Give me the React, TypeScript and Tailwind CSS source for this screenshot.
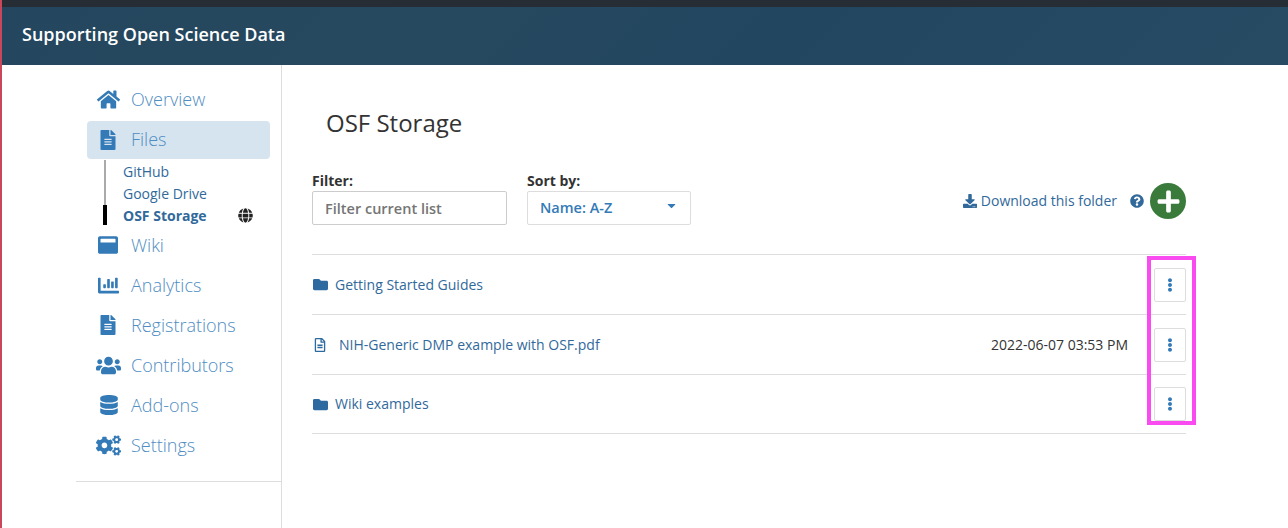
import { FaHome, FaFileAlt, FaWindowMaximize, FaChartBar, FaUsers, FaDatabase, FaCogs, FaGlobe, FaDownload, FaQuestionCircle, FaPlus, FaFolder, FaRegFileAlt, FaEllipsisV, FaCaretDown } from "react-icons/fa";
import type { ComponentType } from "react";

type Item = { label: string; icon: ComponentType<{ className?: string }>; size: string; offset: string };

const bottomNav: Item[] = [
  { label: "Analytics", icon: FaChartBar, size: "text-[21px]", offset: "w-[44px] pl-[11px]" },
  { label: "Registrations", icon: FaFileAlt, size: "text-[20px]", offset: "w-[44px] pl-[11px]" },
  { label: "Contributors", icon: FaUsers, size: "text-[25px]", offset: "w-[44px] pl-[9px]" },
  { label: "Add-ons", icon: FaDatabase, size: "text-[20px]", offset: "w-[44px] pl-[12px]" },
  { label: "Settings", icon: FaCogs, size: "text-[25px]", offset: "w-[44px] pl-[9px]" },
];

function NavRow({ item }: { item: Item }) {
  const Icon = item.icon;
  return (
    <div className="h-10 flex items-center text-[18px] font-light text-[#4f8dc2]">
      <span className={`${item.offset} shrink-0 text-[#337ab7] ${item.size}`}>
        <Icon />
      </span>
      <span>{item.label}</span>
    </div>
  );
}

function Row({ icon, name, date, h, nameClass }: { icon: "folder" | "file"; name: string; date?: string; h: string; nameClass?: string }) {
  return (
    <div className={`${h} flex items-center border-b border-[#dddddd] text-[14px]`}>
      {icon === "folder" ? (
        <FaFolder className="text-[15px] text-[#2d6a9f] mr-[7px] ml-[1px] shrink-0" />
      ) : (
        <FaRegFileAlt className="text-[14px] text-[#2d6a9f] mr-[12px] ml-[1px] shrink-0" />
      )}
      <span className={`text-[#31699b] ${nameClass ?? ""}`}>{name}</span>
      <span className="ml-auto mr-[26px] text-[#333333]">{date}</span>
      <button className="w-[32px] h-[34px] border border-[#dddddd] rounded-[2px] bg-white flex items-center justify-center text-[#337ab7]">
        <FaEllipsisV className="text-[14px]" />
      </button>
    </div>
  );
}

export default function App() {
  return (
    <div className="w-[1288px] h-[528px] overflow-hidden bg-white relative font-['Open_Sans',sans-serif] text-[#333333]">
      <div className="h-[7px] bg-[#262d35]" />
      <div className="h-[58px] bg-[linear-gradient(135deg,#24475f_0%,#26495f_35%,#224660_60%,#264b63_100%)] pl-[22px] pb-[4px] flex items-center text-white text-[18px] font-semibold">
        Supporting Open Science Data
      </div>
      <div className="absolute left-0 top-0 bottom-0 w-[2px] bg-[#c8475a]" />
      <div className="flex h-[463px]">
        <aside className="w-[282px] border-r border-[#dddddd] pl-[76px] shrink-0 h-full">
          <div className="h-[417px] border-b border-[#dddddd] pt-[15px]">
            <div className="pl-[11px] pr-[11px]">
              <div className="h-[41px] pb-[2px] flex items-center text-[18px] font-light text-[#4f8dc2]">
                <span className="w-[44px] pl-[10px] shrink-0 text-[#337ab7]"><FaHome className="text-[23px]" /></span>
                <span>Overview</span>
              </div>
              <div className="h-[38px] pb-[1px] flex items-center text-[18px] font-light text-[#4f8dc2] bg-[#d6e4f0] rounded-[4px]">
                <span className="w-[44px] pl-[11px] shrink-0 text-[#337ab7] text-[20px]"><FaFileAlt /></span>
                <span>Files</span>
              </div>
              <div className="relative pl-[36px] pt-[1px] text-[14px] text-[#31699b]">
                <div className="absolute left-[17px] top-[1px] w-[2px] h-[45px] bg-[#aaaaaa]" />
                <div className="absolute left-[16px] top-[46px] w-[4px] h-[20px] bg-black" />
                <div className="h-[22px] flex items-center">GitHub</div>
                <div className="h-[22px] flex items-center">Google Drive</div>
                <div className="h-[22px] flex items-center font-bold">
                  OSF Storage
                  <FaGlobe className="ml-[31px] text-[15px] text-[#222222]" />
                </div>
              </div>
              <div className="h-[40px] -mt-[1px] flex items-center text-[18px] font-light text-[#4f8dc2]">
                <span className="w-[44px] pl-[11px] shrink-0 text-[#337ab7] text-[20px]"><FaWindowMaximize /></span>
                <span>Wiki</span>
              </div>
              {bottomNav.map((item) => (
                <NavRow key={item.label} item={item} />
              ))}
            </div>
          </div>
        </aside>
        <main className="pl-[30px] w-[904px]">
          <h1 className="pl-[14px] pt-[41px] text-[24px] leading-[34px] text-[#333333]">OSF Storage</h1>
          <div className="flex mt-[31px] items-start h-[82px] relative">
            <div className="w-[215px]">
              <div className="text-[14px] font-bold leading-[18px] mt-[1px] mb-[1px]">Filter:</div>
              <div className="w-[195px] h-[34px] border border-[#cccccc] rounded-[2px] pl-[12px] pt-[2px] flex items-center text-[14.5px] font-semibold text-[#757575]">
                Filter current list
              </div>
            </div>
            <div>
              <div className="text-[14px] font-bold leading-[18px] mt-[1px] mb-[1px]">Sort by:</div>
              <div className="w-[164px] h-[34px] border border-[#dddddd] rounded-[2px] pl-[12px] pr-[12px] flex items-center justify-between text-[14.5px] font-semibold text-[#337ab7]">
                Name: A-Z
                <FaCaretDown className="text-[13px] -mt-[5px]" />
              </div>
            </div>
            <div className="ml-auto flex items-center mt-[12px] h-[36px]">
              <FaDownload className="text-[14px] text-[#31699b] mr-[4px]" />
              <span className="text-[14px] pb-[2px] text-[#31699b]">Download this folder</span>
              <FaQuestionCircle className="ml-[13px] text-[14px] text-[#31699b]" />
              <span className="ml-[6px] w-[36px] h-[36px] rounded-full bg-[#3a7a3a] flex items-center justify-center text-white">
                <FaPlus className="text-[25px]" />
              </span>
            </div>
          </div>
          <div className="border-t border-[#dddddd] mt-[1px]">
            <Row icon="folder" name="Getting Started Guides" h="h-[60px]" />
            <Row icon="file" name="NIH-Generic DMP example with OSF.pdf" date="2022-06-07 03:53 PM" h="h-[60px]" />
            <Row icon="folder" name="Wiki examples" h="h-[59px]" nameClass="-mt-[2px]" />
          </div>
          <div className="absolute left-[1147px] top-[256px] w-[49px] h-[169px] border-[4px] border-[#f94bf0]" />
        </main>
      </div>
    </div>
  );
}
